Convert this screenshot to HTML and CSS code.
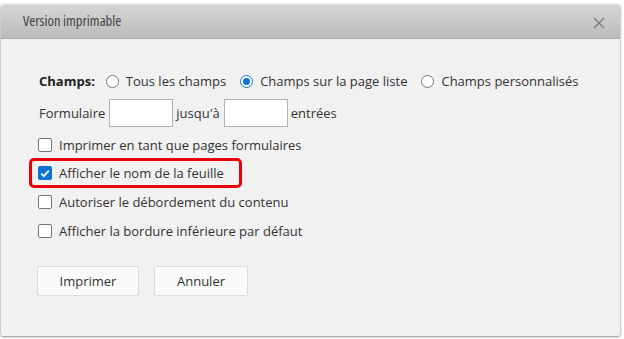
FILE: index.html
```html
<!DOCTYPE html>
<html>
<head>
<meta charset="utf-8">
<link rel="stylesheet" href="styles.css">
</head>
<body>
<div class="dialog">
  <div class="header">
    <span class="title">Version imprimable</span>
    <svg class="close" width="12" height="12" viewBox="0 0 12 12"><path d="M1 1L11 11M11 1L1 11" stroke="#777" stroke-width="1.3" fill="none"/></svg>
  </div>
  <div class="body">
    <div class="row fields">
      <span class="label">Champs:</span>
      <label class="opt"><span class="radio"></span>Tous les champs</label>
      <label class="opt"><span class="radio on"></span>Champs sur la page liste</label>
      <label class="opt"><span class="radio"></span>Champs personnalisés</label>
    </div>
    <div class="row form">
      <span>Formulaire</span><span class="input"></span><span>jusqu'à</span><span class="input"></span><span>entrées</span>
    </div>
    <div class="checks">
      <label class="check"><span class="box"></span>Imprimer en tant que pages formulaires</label>
      <label class="check highlight"><span class="box on"><svg width="10" height="9" viewBox="0 0 10 9"><path d="M1.3 4.6L3.8 7.1L8.8 1.6" stroke="#fff" stroke-width="1.8" fill="none"/></svg></span>Afficher le nom de la feuille</label>
      <label class="check"><span class="box"></span>Autoriser le débordement du contenu</label>
      <label class="check"><span class="box"></span>Afficher la bordure inférieure par défaut</label>
    </div>
    <div class="buttons">
      <button class="btn print">Imprimer</button>
      <button class="btn cancel">Annuler</button>
    </div>
  </div>
</div>
</body>
</html>
```
FILE: styles.css
```css
html, body {
  margin: 0;
  padding: 0;
  background: #fff;
  width: 624px;
  height: 339px;
  overflow: hidden;
}
body {
  font-family: "Open Sans", "Noto Sans", sans-serif;
  font-size: 13px;
  color: #333;
  padding: 5px 0 0 1px;
  box-sizing: border-box;
  white-space: nowrap;
}
.dialog {
  width: 619px;
  height: 331px;
  background: #f1f1f1;
  box-shadow: 0 0 3px rgba(0,0,0,0.35), 0 1px 2px rgba(0,0,0,0.3);
  border-radius: 2px;
  display: flex;
  flex-direction: column;
  overflow: hidden;
}
.header {
  height: 34px;
  flex: none;
  background: linear-gradient(#d5d5d5, #bbbbbb);
  border-bottom: 1px solid #ababab;
  display: flex;
  align-items: center;
  justify-content: space-between;
  padding: 0 15px 0 22px;
  box-sizing: border-box;
}
.title {
  font-size: 14.5px;
  font-stretch: 76%;
  font-weight: 500;
  color: #444;
  margin-top: -3px;
}
.close {
  margin-top: 2px;
}
.body {
  padding: 29px 0 0 36px;
  display: flex;
  flex-direction: column;
}
.row {
  display: flex;
  align-items: center;
}
.fields {
  height: 26px;
  padding-left: 2px;
}
.label {
  font-weight: bold;
  color: #222;
  margin-right: 11px;
}
.opt {
  display: flex;
  align-items: center;
  margin-right: 14px;
}
.radio {
  width: 11px;
  height: 11px;
  border: 1px solid #767676;
  border-radius: 50%;
  background: #fff;
  margin-right: 7px;
  position: relative;
}
.radio.on {
  border-color: #0b73d9;
}
.radio.on::after {
  content: "";
  position: absolute;
  left: 2px;
  top: 2px;
  width: 7px;
  height: 7px;
  border-radius: 50%;
  background: #0b73d9;
}
.form {
  height: 30px;
  margin-top: 4px;
  padding-left: 2px;
}
.input {
  width: 62px;
  height: 26px;
  background: #fff;
  border: 1px solid #b3b3b3;
  margin: 0 3px 0 4px;
}
.checks {
  display: flex;
  flex-direction: column;
  margin-top: 2px;
}
.check {
  display: flex;
  align-items: center;
  height: 29px;
  padding-left: 1px;
}
.box {
  width: 12px;
  height: 12px;
  border: 1px solid #767676;
  border-radius: 2px;
  background: #fff;
  margin-right: 7px;
  display: flex;
  align-items: center;
  justify-content: center;
}
.box.on {
  background: #0b73d9;
  border-color: #0b73d9;
}
.highlight {
  outline: 3px solid #e8000b;
  outline-offset: -3px;
  border-radius: 5px;
  margin-left: -8px;
  padding-left: 9px;
  width: 213px;
  box-sizing: border-box;
  height: 30px;
  margin-top: -1px;
  margin-bottom: -1px;
}
.buttons {
  display: flex;
  gap: 15px;
  margin-top: 21px;
}
.btn {
  font-family: inherit;
  font-size: 13px;
  color: #333;
  background: #fafafa;
  border: 1px solid #dcdcdc;
  border-radius: 2px;
  height: 30px;
  padding: 0;
}
.print { width: 102px; }
.cancel { width: 94px; }
```
